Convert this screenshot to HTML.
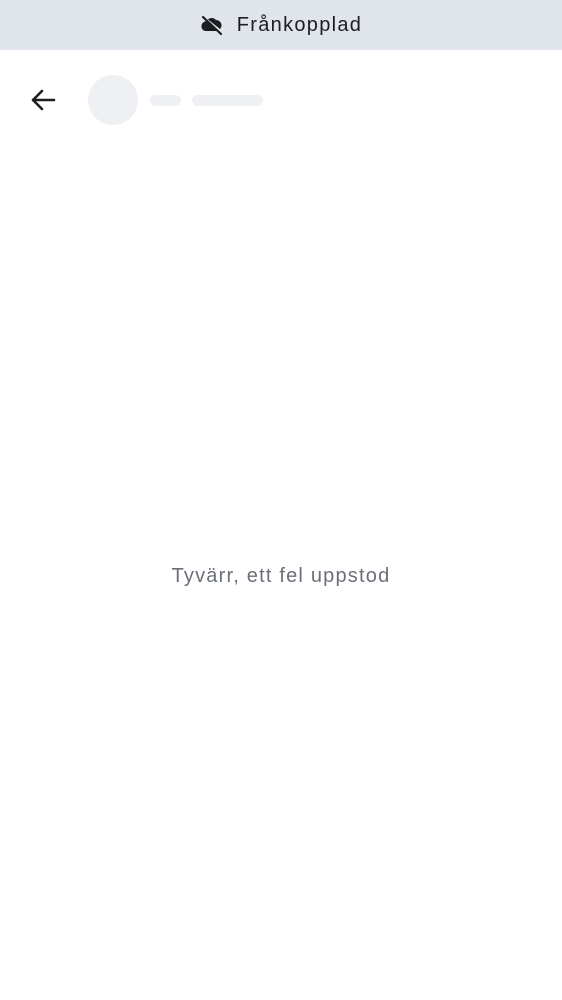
<!DOCTYPE html>
<html><head><meta charset="utf-8"><style>
html,body{margin:0;padding:0;width:562px;height:1000px;background:#fff;font-family:"Liberation Sans",sans-serif;overflow:hidden;position:relative}
.bar{position:absolute;left:0;top:0;width:562px;height:50px;background:#e0e4eb;display:flex;align-items:center;justify-content:center;gap:13px;color:#1c1d21;font-size:20px;letter-spacing:1.3px}
.c{position:absolute;left:88px;top:75px;width:50px;height:50px;border-radius:50%;background:#eff0f3}
.p1{position:absolute;left:150px;top:95px;width:31px;height:11px;border-radius:6px;background:#eff0f3}
.p2{position:absolute;left:192px;top:95px;width:71px;height:11px;border-radius:6px;background:#eff0f3}
.msg{position:absolute;top:565px;left:0;width:562px;text-align:center;color:#6b6f78;font-size:20px;letter-spacing:1.2px}
</style></head><body>
<div class="bar"><svg width="24" height="22" viewBox="0 0 24 22"><path d="M6 7 C3 8 1 10 1.5 13 C2 16 4 17 6 17 L17 17 Z" fill="#1c1d21"/><path d="M8 5.5 C10 3.5 14 3.5 16 6 C19 6 22 8.5 21.5 12 C21.3 13 21 14 20 15 Z" fill="#1c1d21"/><path d="M3 3 L21 20" stroke="#1c1d21" stroke-width="2.2" stroke-linecap="round"/></svg><span>Frånkopplad</span></div>
<svg style="position:absolute;left:30px;top:88px" width="26" height="24" viewBox="0 0 26 24"><path d="M24 12 H3 M12 3 L3 12 L12 21" fill="none" stroke="#1c1d21" stroke-width="2.6" stroke-linecap="round" stroke-linejoin="round"/></svg>
<div class="c"></div><div class="p1"></div><div class="p2"></div>
<div class="msg">Tyvärr, ett fel uppstod</div>
</body></html>
